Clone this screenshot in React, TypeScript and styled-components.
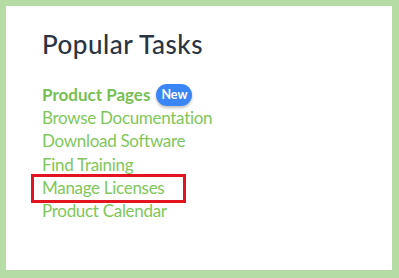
import React from "react";
import styled, { createGlobalStyle } from "styled-components";

const Global = createGlobalStyle`
  html, body { margin: 0; padding: 0; }
  body {
    width: 399px;
    height: 278px;
    background: #b4dca4;
    font-family: "Lato", "Noto Sans", sans-serif;
    overflow: hidden;
  }
`;

const Frame = styled.div`
  box-sizing: border-box;
  width: 399px;
  height: 278px;
  padding: 6px 7px 8px 6px;
`;

const Card = styled.section`
  box-sizing: border-box;
  height: 100%;
  background: #ffffff;
  padding: 23px 0 0 36px;
`;

const Title = styled.h2`
  margin: 0 0 23px 0;
  font-size: 26px;
  line-height: 31px;
  font-weight: 500;
  letter-spacing: 0.5px;
  color: #2a3443;
`;

const List = styled.ul`
  list-style: none;
  margin: 0;
  padding: 0;
  display: flex;
  flex-direction: column;
`;

const Item = styled.li`
  display: flex;
  align-items: center;
  height: 23.2px;
  position: relative;
`;

const Link = styled.a<{ $strong?: boolean }>`
  color: ${(p) => (p.$strong ? "#78bf52" : "#7fc75b")};
  font-size: 17px;
  letter-spacing: ${(p) => (p.$strong ? "0px" : "-0.3px")};
  font-weight: ${(p) => (p.$strong ? 700 : 400)};
  text-decoration: none;
  white-space: nowrap;
`;

const Highlight = styled.span`
  position: absolute;
  left: -11px;
  top: -2px;
  width: 155px;
  height: 29px;
  box-sizing: border-box;
  border: 3px solid #e3141f;
  pointer-events: none;
`;

const Badge = styled.span`
  display: inline-flex;
  align-items: center;
  justify-content: center;
  margin-left: 6px;
  height: 22px;
  padding: 0 5px;
  border-radius: 11px;
  background: #3b86f6;
  color: #ffffff;
  font-size: 12.5px;
  font-weight: 700;
  box-shadow: 0 2px 3px rgba(0, 0, 0, 0.25);
`;

const tasks = [
  { label: "Product Pages", strong: true, badge: "New" },
  { label: "Browse Documentation" },
  { label: "Download Software" },
  { label: "Find Training" },
  { label: "Manage Licenses", boxed: true },
  { label: "Product Calendar" },
];

export default function App() {
  return (
    <>
      <Global />
      <Frame>
        <Card>
          <Title>Popular Tasks</Title>
          <List>
            {tasks.map((t) => (
              <Item key={t.label}>
                <Link href="#" $strong={t.strong}>
                  {t.label}
                </Link>
                {t.badge && <Badge>{t.badge}</Badge>}
                {t.boxed && <Highlight />}
              </Item>
            ))}
          </List>
        </Card>
      </Frame>
    </>
  );
}
